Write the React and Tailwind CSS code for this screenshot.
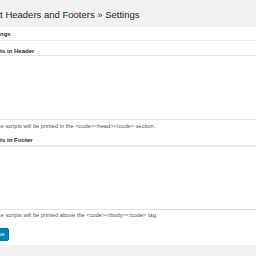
export default function App() {
  return (
    <div className="w-[256px] h-[256px] overflow-hidden bg-[#f1f1f1] font-['Liberation_Sans',Arial,sans-serif] text-[#23282d]">
      <h1 className="h-[27px] pt-[3px] flex items-center -ml-[21px] text-[9.5px] leading-none font-normal whitespace-nowrap">
        Insert Headers and Footers » Settings
      </h1>

      <div className="bg-white h-[218px]">
        <h2 className="h-[14px] border-b border-[#eeeeee] flex items-center -ml-[13px] text-[6px] font-bold leading-none whitespace-nowrap">
          Settings
        </h2>

        <form className="flex flex-col">
          <label className="pt-[7px] h-[14px] -ml-[15px] text-[6px] leading-[7px] font-bold whitespace-nowrap">
            Scripts in Header
          </label>
          <textarea
            className="block -ml-[20px] w-[320px] h-[65px] border border-[#e2e2e2] resize-none outline-none"
            readOnly
          />
          <p className="mt-[3px] -ml-[12px] text-[5.7px] leading-[7px] text-[#555] whitespace-nowrap">
            These scripts will be printed in the &lt;code&gt;&lt;head&gt;&lt;/code&gt; section.
          </p>

          <label className="mt-[7px] -ml-[15px] text-[6px] leading-[7px] font-bold whitespace-nowrap">
            Scripts in Footer
          </label>
          <textarea
            className="block mt-[1px] -ml-[20px] w-[320px] h-[65px] border border-[#e2e2e2] shadow-[inset_0_1px_1px_rgba(0,0,0,0.06)] resize-none outline-none"
            readOnly
          />
          <p className="mt-[2px] -ml-[12px] text-[5.7px] leading-[7px] text-[#555] whitespace-nowrap">
            These scripts will be printed above the &lt;code&gt;&lt;/body&gt;&lt;/code&gt; tag.
          </p>

          <div>
            <button
              type="button"
              className="mt-[5px] -ml-[12px] h-[13px] px-[3px] bg-[#0085ba] border border-[#0073aa] rounded-[2px] text-white text-[5.5px] leading-none"
            >
              Save
            </button>
          </div>
        </form>
      </div>
    </div>
  )
}
